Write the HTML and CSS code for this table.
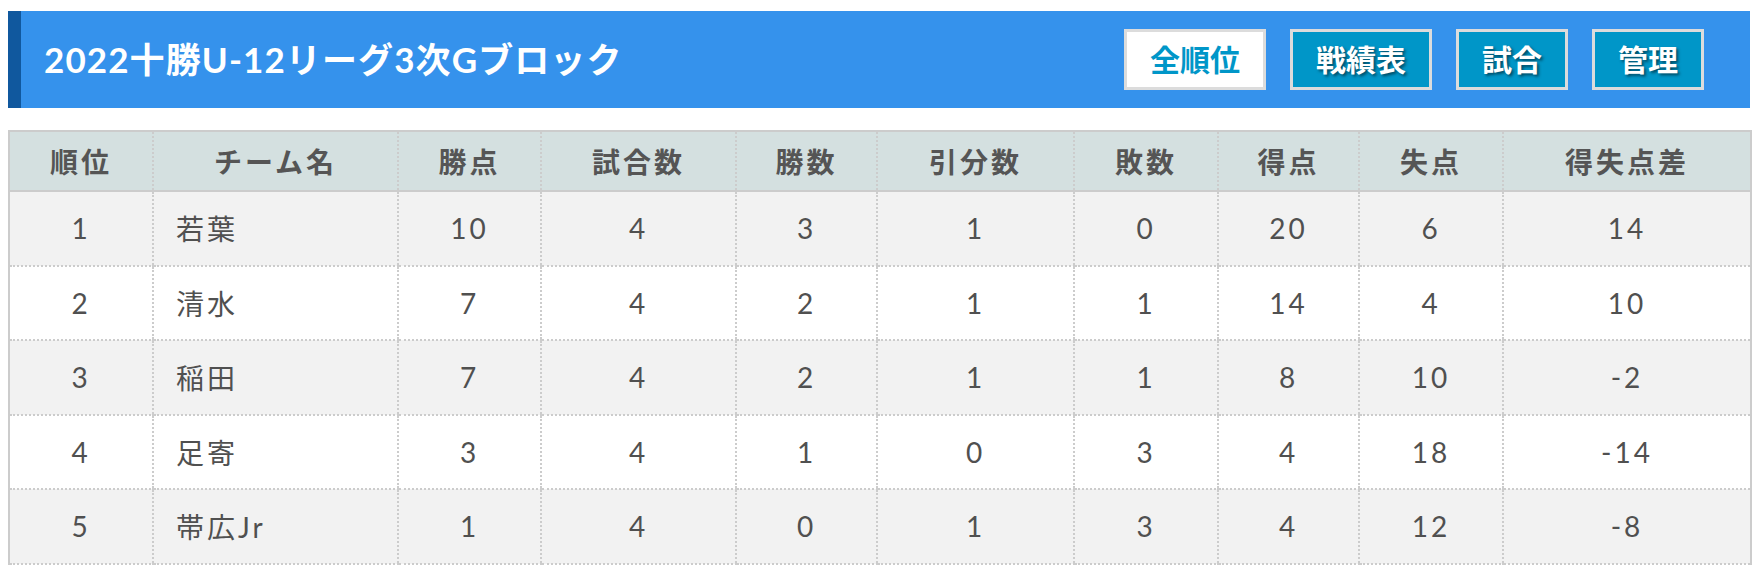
FILE: index.html
```html
<!DOCTYPE html>
<html lang="ja">
<head>
<meta charset="utf-8">
<title>2022十勝U-12リーグ3次Gブロック</title>
<link rel="stylesheet" href="styles.css">
</head>
<body>
<div class="page">
  <header class="bar">
    <h1 class="title">2022十勝U-12リーグ3次Gブロック</h1>
    <nav class="nav">
      <a class="btn btn-active">全順位</a>
      <a class="btn">戦績表</a>
      <a class="btn">試合</a>
      <a class="btn">管理</a>
    </nav>
  </header>
  <table class="standings">
    <colgroup>
      <col class="c-rank"><col class="c-team"><col class="c-pts"><col class="c-gp"><col class="c-w"><col class="c-d"><col class="c-l"><col class="c-gf"><col class="c-ga"><col class="c-gd">
    </colgroup>
    <thead>
      <tr><th>順位</th><th>チーム名</th><th>勝点</th><th>試合数</th><th>勝数</th><th>引分数</th><th>敗数</th><th>得点</th><th>失点</th><th>得失点差</th></tr>
    </thead>
    <tbody>
      <tr><td>1</td><td class="team">若葉</td><td>10</td><td>4</td><td>3</td><td>1</td><td>0</td><td>20</td><td>6</td><td>14</td></tr>
      <tr><td>2</td><td class="team">清水</td><td>7</td><td>4</td><td>2</td><td>1</td><td>1</td><td>14</td><td>4</td><td>10</td></tr>
      <tr><td>3</td><td class="team">稲田</td><td>7</td><td>4</td><td>2</td><td>1</td><td>1</td><td>8</td><td>10</td><td>-2</td></tr>
      <tr><td>4</td><td class="team">足寄</td><td>3</td><td>4</td><td>1</td><td>0</td><td>3</td><td>4</td><td>18</td><td>-14</td></tr>
      <tr><td>5</td><td class="team">帯広Jr</td><td>1</td><td>4</td><td>0</td><td>1</td><td>3</td><td>4</td><td>12</td><td>-8</td></tr>
    </tbody>
  </table>
</div>
</body>
</html>
```
FILE: styles.css
```css
html, body {
  margin: 0;
  padding: 0;
  background: #fff;
}
body {
  font-family: "Lato", "Noto Sans CJK JP", sans-serif;
  color: #505050;
}
.page {
  padding: 11px 12px 0 8px;
}
.bar {
  display: flex;
  align-items: center;
  justify-content: space-between;
  height: 97px;
  box-sizing: border-box;
  background: #3592ec;
  border-left: 13px solid #10589e;
  padding: 0 46px 0 23px;
}
.title {
  margin: 0;
  font-size: 35px;
  font-weight: 700;
  letter-spacing: 1.1px;
  color: #fff;
  line-height: 1;
}
.nav {
  display: flex;
  gap: 24px;
}
.btn {
  display: block;
  height: 61px;
  box-sizing: border-box;
  line-height: 55px;
  padding: 0 23px;
  border: 3px solid #dcdcdc;
  background: #0096c8;
  color: #fff;
  font-size: 30px;
  font-weight: 700;
  text-shadow: 2px 2px 3px rgba(0, 0, 0, 0.5);
  cursor: pointer;
}
.btn-active {
  background: #fff;
  color: #0096c8;
  text-shadow: none;
}
.standings {
  margin-top: 22px;
  width: 1742px;
  table-layout: fixed;
  border-collapse: collapse;
  border-top: 2px solid #cccccc;
  border-left: 2px solid #cccccc;
  border-right: 2px solid #cccccc;
  font-size: 28px;
  letter-spacing: 3px;
}
.c-rank { width: 144px; }
.c-team { width: 245px; }
.c-pts { width: 143px; }
.c-gp { width: 195px; }
.c-w { width: 141px; }
.c-d { width: 197px; }
.c-l { width: 144px; }
.c-gf { width: 141px; }
.c-ga { width: 144px; }
.c-gd { width: 248px; }
.standings th {
  height: 58px;
  padding: 0;
  background: #d4e0e0;
  color: #555;
  font-size: 28px;
  font-weight: 700;
  letter-spacing: 3px;
  border-left: 2px dotted #cccccc;
  border-bottom: 2px solid #cccccc;
  text-align: center;
}
.standings td {
  height: 72.5px;
  padding: 0;
  text-align: center;
  border-left: 2px dotted #cccccc;
  border-bottom: 2px dotted #cccccc;
  font-weight: 400;
}
.standings tbody tr:nth-child(odd) td {
  background: #f2f2f2;
}
.standings tbody tr:nth-child(even) td {
  background: #ffffff;
}
.standings td.team {
  text-align: left;
  padding-left: 22px;
}
```
